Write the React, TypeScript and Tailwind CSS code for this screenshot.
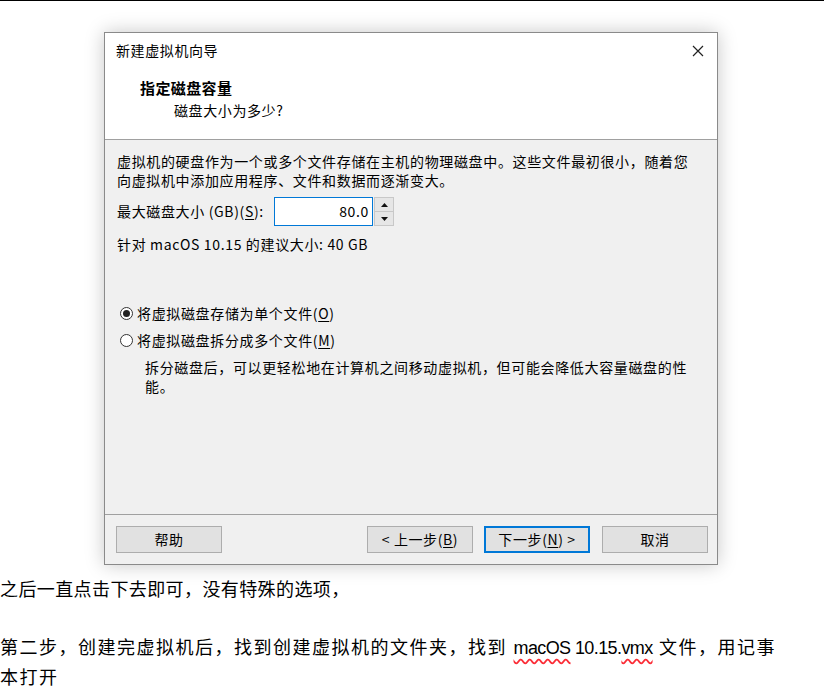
const dlgFont = { fontFamily: '"Noto Sans CJK SC", "Liberation Sans", sans-serif' }
const docFont = { fontFamily: '"Liberation Sans", "Noto Sans CJK SC", sans-serif' }

function U({ children }: { children: string }) {
  return <span className="underline underline-offset-2">{children}</span>
}

function Radio({ checked }: { checked?: boolean }) {
  return (
    <span className="w-[13px] h-[13px] rounded-full border border-[#333] bg-white flex items-center justify-center shrink-0">
      {checked && <span className="w-[7px] h-[7px] rounded-full bg-[#222]" />}
    </span>
  )
}

function Btn({ children, primary }: { children: React.ReactNode; primary?: boolean }) {
  return (
    <button
      className={
        'w-[106px] h-[27px] bg-[#e1e1e1] text-[14px] tracking-[0.6px] text-black flex items-center justify-center ' +
        (primary ? 'border-2 border-[#0078d7]' : 'border border-[#adadad]')
      }
    >
      {children}
    </button>
  )
}

function Dialog() {
  return (
    <div
      className="ml-[104px] mt-[31px] w-[614px] h-[533px] border border-[#8a8a8a] bg-[#f0f0f0] flex flex-col shadow-[0_0_18px_rgba(0,0,0,0.22)] text-black"
      style={dlgFont}
    >
      {/* header */}
      <div className="h-[107px] bg-white border-b border-[#a0a0a0] flex flex-col">
        <div className="flex items-center justify-between pt-[9px] pl-[11px] pr-[13px] h-[25px]">
          <span className="text-[14px] leading-[16px] tracking-[0.6px]">新建虚拟机向导</span>
          <svg width="12" height="12" viewBox="0 0 12 12" className="mt-[2px]">
            <path d="M1 1 L11 11 M11 1 L1 11" stroke="#222" strokeWidth="1.2" />
          </svg>
        </div>
        <div className="pl-[35px] mt-[21px] text-[15px] leading-[18px] font-bold tracking-[0.4px]">指定磁盘容量</div>
        <div className="pl-[69px] mt-[4px] text-[14px] leading-[18px] tracking-[0.6px]">磁盘大小为多少?</div>
      </div>

      {/* body */}
      <div className="h-[375px] border-b border-[#a0a0a0] pl-[12px] pt-[12px] text-[14px] leading-[19px] tracking-[0.65px]">
        <p>虚拟机的硬盘作为一个或多个文件存储在主机的物理磁盘中。这些文件最初很小，随着您</p>
        <p>向虚拟机中添加应用程序、文件和数据而逐渐变大。</p>

        <div className="flex items-center mt-[7px] h-[29px]">
          <span className="w-[157px]">
            最大磁盘大小 (GB)(<U>S</U>):
          </span>
          <div className="w-[99px] h-[29px] bg-white border border-[#0078d7] flex items-center justify-end pr-[3px] text-[14px]">
            80.0
          </div>
          <div className="w-[20px] h-[29px] ml-px border border-[#c8c8c8] bg-[#e6e6e6] flex flex-col">
            <div className="flex-1 border-b border-[#c8c8c8] flex items-center justify-center">
              <svg width="7" height="4" viewBox="0 0 7 4">
                <path d="M0 4 L3.5 0 L7 4 Z" fill="#111" />
              </svg>
            </div>
            <div className="flex-1 flex items-center justify-center">
              <svg width="7" height="4" viewBox="0 0 7 4">
                <path d="M0 0 L3.5 4 L7 0 Z" fill="#111" />
              </svg>
            </div>
          </div>
        </div>

        <p className="mt-[9px]">针对 macOS 10.15 的建议大小: 40 GB</p>

        <div className="mt-[50px] flex items-center gap-[4px] pl-[3px]">
          <Radio checked />
          <span>
            将虚拟磁盘存储为单个文件(<U>O</U>)
          </span>
        </div>
        <div className="mt-[8px] flex items-center gap-[4px] pl-[3px]">
          <Radio />
          <span>
            将虚拟磁盘拆分成多个文件(<U>M</U>)
          </span>
        </div>
        <div className="mt-[8px] pl-[28px] leading-[19px]">
          <p>拆分磁盘后，可以更轻松地在计算机之间移动虚拟机，但可能会降低大容量磁盘的性</p>
          <p>能。</p>
        </div>
      </div>

      {/* footer */}
      <div className="flex-1 flex items-start pt-[11px] pl-[11px] pr-[9px]">
        <Btn>帮助</Btn>
        <div className="flex-1" />
        <div className="flex gap-[11px]">
          <Btn>
            &lt; 上一步(<U>B</U>)
          </Btn>
          <Btn primary>
            下一步(<U>N</U>) &gt;
          </Btn>
          <div className="ml-px">
            <Btn>取消</Btn>
          </div>
        </div>
      </div>
    </div>
  )
}

export default function App() {
  return (
    <div className="w-[824px] h-[693px] bg-white overflow-hidden flex flex-col">
      <div className="h-px bg-black w-full" />
      <Dialog />
      <div className="text-[18px] leading-[30px] text-black" style={docFont}>
        <p className="mt-[10px] tracking-[0.4px]">之后一直点击下去即可，没有特殊的选项，</p>
        <p className="mt-[28px] tracking-[1.5px]">
          第二步，创建完虚拟机后，找到创建虚拟机的文件夹，找到{' '}
          <span className="tracking-[-0.6px]">
            <span className="underline decoration-wavy decoration-red-500 underline-offset-4">macOS</span> 10.15.
            <span className="underline decoration-wavy decoration-red-500 underline-offset-4">vmx</span>
          </span>{' '}
          文件，用记事
          <br />
          本打开
        </p>
      </div>
    </div>
  )
}
